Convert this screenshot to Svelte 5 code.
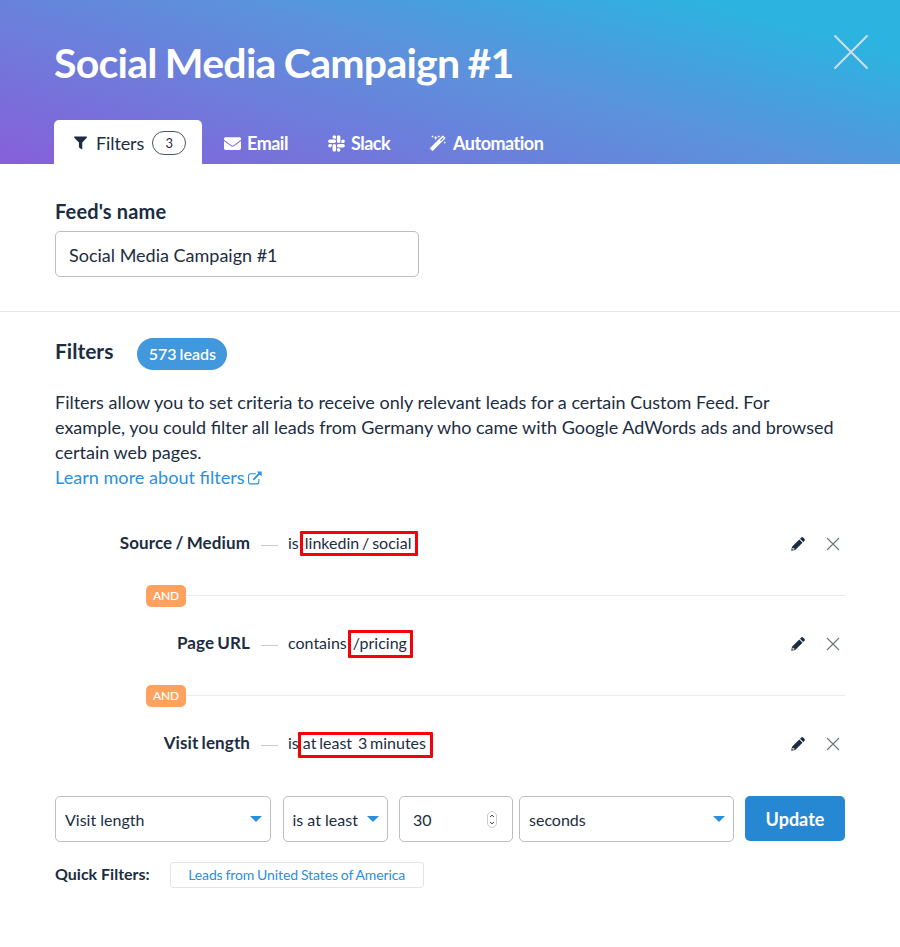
<script>
let feedName = 'Social Media Campaign #1';
let amount = '30';

const tabs = [
    { id: 'email', label: 'Email' },
    { id: 'slack', label: 'Slack' },
    { id: 'automation', label: 'Automation' }
];

let filters = [
    { id: 'source', name: 'Source / Medium', operator: 'is', value: 'linkedin / social' },
    { id: 'page', name: 'Page URL', operator: 'contains', value: '/pricing' },
    { id: 'visit', name: 'Visit length', operator: 'is', value: 'at least  3 minutes' }
];

function removeFilter(id) {
    filters = filters.filter((f) => f.id !== id);
}
</script>

<header>
    <div class="top">
        <h1>{feedName}</h1>
        <button class="close" aria-label="Close">
            <svg width="36" height="36" viewBox="0 0 36 36"><path d="M2 2L34 34M34 2L2 34" /></svg>
        </button>
    </div>

    <nav>
        <button class="tab active">
            <svg class="filter-icon" viewBox="0 0 14 14"><path d="M.6 0h12.800q.8.6.3 1.300L8.900 6.500v6.800q-.2.700-.8.500L5.300 11.600V6.500L.3 1.300Q-.2.600.6 0z" /></svg>
            <span>Filters</span>
            <span class="count">{filters.length}</span>
        </button>
        {#each tabs as tab}
            <button class="tab {tab.id}">
                {#if tab.id === 'email'}
                    <svg width="17" height="17" viewBox="0 0 512 512"><path d="M502.3 190.8c3.900-3.100 9.700-.2 9.700 4.700V400c0 26.500-21.500 48-48 48H48c-26.500 0-48-21.500-48-48V195.600c0-5 5.700-7.800 9.700-4.700 22.400 17.400 52.100 39.500 154.100 113.600 21.100 15.400 56.700 47.800 92.200 47.600 35.700.3 72-32.800 92.300-47.600 102-74.100 131.600-96.300 154-113.700zM256 320c23.200.4 56.600-29.200 73.400-41.400 132.700-96.300 142.800-104.700 173.400-128.700 5.800-4.500 9.200-11.500 9.200-18.900v-19c0-26.500-21.500-48-48-48H48c-26.500 0-48 21.500-48 48v19c0 7.400 3.400 14.300 9.200 18.900 30.600 23.900 40.700 32.400 173.400 128.700 16.800 12.200 50.200 41.800 73.400 41.400z" /></svg>
                {:else if tab.id === 'slack'}
                    <svg width="17" height="19" viewBox="0 0 448 512"><path d="M94.120 315.1c0 25.900-21.160 47.060-47.060 47.060S0 341 0 315.1c0-25.900 21.160-47.060 47.060-47.060h47.060v47.060zm23.720 0c0-25.900 21.160-47.060 47.060-47.060s47.060 21.160 47.060 47.060v117.840c0 25.900-21.160 47.060-47.060 47.060s-47.060-21.160-47.060-47.060V315.1zm47.060-188.980c-25.900 0-47.060-21.160-47.060-47.060S139 32 164.900 32s47.060 21.160 47.060 47.060v47.060H164.900zm0 23.720c25.900 0 47.060 21.160 47.060 47.060s-21.160 47.060-47.060 47.060H47.060C21.160 243.960 0 222.800 0 196.900s21.160-47.060 47.060-47.060H164.900zm188.980 47.060c0-25.900 21.160-47.060 47.060-47.060 25.900 0 47.060 21.160 47.060 47.060s-21.160 47.060-47.060 47.060h-47.060V196.900zm-23.720 0c0 25.900-21.160 47.060-47.060 47.060-25.900 0-47.060-21.160-47.060-47.060V79.060c0-25.900 21.160-47.060 47.060-47.060 25.900 0 47.060 21.160 47.060 47.060V196.900zM283.100 385.880c25.900 0 47.060 21.160 47.060 47.060 0 25.900-21.160 47.060-47.060 47.060-25.900 0-47.060-21.160-47.060-47.060v-47.060h47.060zm0-23.720c-25.900 0-47.060-21.160-47.060-47.060 0-25.900 21.160-47.060 47.060-47.060h117.840c25.900 0 47.060 21.160 47.060 47.060 0 25.900-21.160 47.060-47.060 47.060H283.100z" /></svg>
                {:else}
                    <svg width="16" height="16" viewBox="0 0 16 16"><path fill-rule="evenodd" d="M.3 12.700L12.100.9a1 1 0 0 1 1.400 0l1.500 1.500a1 1 0 0 1 0 1.400L3.200 15.600a1 1 0 0 1-1.400 0L.3 14.100a1 1 0 0 1 0-1.400zM10 5.300l.9.9 3-3.100-.9-.9zM5.700.7l.6 1.500 1.500.6-1.500.6-.6 1.500-.6-1.500-1.500-.6 1.500-.6zM2.500.2l.4.900.9.4-.9.4-.4.900-.4-.9-.9-.4.9-.4zM8.800.2l.4.900.9.4-.9.4-.4.900-.4-.9-.9-.4.9-.4zM14.800 6.300l.4.900.9.4-.9.4-.4.900-.4-.9-.9-.4.9-.4z" /></svg>
                {/if}
                <span>{tab.label}</span>
            </button>
        {/each}
    </nav>
</header>

<section class="name">
    <label for="feed-name">Feed's name</label>
    <input id="feed-name" bind:value={feedName} />
</section>

<section class="filters">
    <div class="heading">
        <h2>Filters</h2>
        <span class="leads">573 leads</span>
    </div>

    <p>
        Filters allow you to set criteria to receive only relevant leads for a certain Custom Feed. For<br />
        example, you could filter all leads from Germany who came with Google AdWords ads and browsed<br />
        certain web pages.
    </p>
    <a href="#more">
        <span>Learn more about filters</span>
        <svg width="14" height="14" viewBox="0 0 14 14"><path class="frame" d="M8 2.700H2.600A2 2 0 0 0 .6 4.700v6.200a2 2 0 0 0 2 2h6.200a2 2 0 0 0 2-2V8" /><path class="arrow" d="M5.200 8.800L11.500 2.500" /><path class="tip" d="M8.800.5h4.900v4.900z" /></svg>
    </a>

    <div class="list">
        {#each filters as filter, i (filter.id)}
            {#if i > 0}
                <div class="joint">
                    <span>AND</span>
                    <hr />
                </div>
            {/if}
            <div class="row">
                <strong>{filter.name}</strong>
                <i class="dash"></i>
                <span class="operator">{filter.operator}</span>
                <span class="value {filter.id}">{filter.value}</span>
                <button class="edit" aria-label="Edit">
                    <svg width="14" height="14" viewBox="0 0 14 14"><path fill-rule="evenodd" d="M.2 13.800L1 9.800 8.300 2.500l3.200 3.200L4.200 13zM1.700 10.700l-.4 1.400.7.7 1.400-.4v-.9h-.9v-.8zM9 1.800L10.300.5a1.300 1.300 0 0 1 1.800 0l1.400 1.400a1.300 1.300 0 0 1 0 1.800L12.200 5z" /></svg>
                </button>
                <button class="remove" aria-label="Remove" on:click={() => removeFilter(filter.id)}>
                    <svg width="14" height="14" viewBox="0 0 14 14"><path d="M1 1L13 13M13 1L1 13" /></svg>
                </button>
            </div>
        {/each}
    </div>

    <div class="form">
        <button class="select field">Visit length<i class="caret"></i></button>
        <button class="select operation">is at least<i class="caret"></i></button>
        <div class="number">
            <input aria-label="Amount" bind:value={amount} />
            <svg width="10" height="17" viewBox="0 0 10 17"><rect x=".5" y=".5" width="9" height="16" rx="4.500" /><path d="M3 6L5 4.200 7 6M3 11L5 12.800 7 11" /></svg>
        </div>
        <button class="select unit">seconds<i class="caret"></i></button>
        <button class="update">Update</button>
    </div>

    <div class="quick">
        <b>Quick Filters:</b>
        <button>Leads from United States of America</button>
    </div>
</section>

<style>
:global(body) {
    margin: 0;
    background: #fff;
}

:global(#app) {
    font-family: Lato, "Liberation Sans", sans-serif;
    color: #1c2d3f;
}

button, input {
    font-family: inherit;
    color: inherit;
    margin: 0;
    padding: 0;
    border: 0;
    background: none;
    box-sizing: border-box;
}

svg {
    display: block;
    flex: none;
}

header {
    height: 164px;
    box-sizing: border-box;
    background: linear-gradient(16deg, #875fda 0%, #5b92dc 55%, #2cb3e0 87%);
    display: flex;
    flex-direction: column;
    justify-content: space-between;
    color: #fff;
}

.top {
    display: flex;
    justify-content: space-between;
    padding: 34px 31px 0 54px;
}

h1 {
    margin: 0;
    font-size: 41px;
    line-height: 58px;
    font-weight: 700;
    letter-spacing: -0.75px;
    word-spacing: -1px;
}

.close {
    height: 36px;
}

.close path {
    stroke: #d0dde9;
    stroke-width: 2;
    stroke-linecap: round;
}

nav {
    display: flex;
    padding-left: 54px;
}

.tab {
    height: 44px;
    display: flex;
    align-items: center;
    font-size: 18px;
    font-weight: 700;
    letter-spacing: -0.5px;
    padding-top: 2px;
}

.tab svg {
    fill: currentColor;
}

.tab.active {
    width: 148px;
    padding-left: 20px;
    background: #fff;
    color: #1c2d3f;
    border-radius: 5px 5px 0 0;
    font-weight: 400;
    font-size: 18px;
    letter-spacing: -0.1px;
}

.filter-icon {
    width: 13px;
    height: 14px;
    margin-right: 9px;
}

.count {
    width: 32px;
    height: 22px;
    margin-left: 8px;
    border: 1px solid #4a5662;
    border-radius: 12px;
    font-size: 13px;
    line-height: 22px;
    text-align: center;
}

.email {
    margin-left: 22px;
    gap: 6px;
}

.slack {
    margin-left: 40px;
    gap: 6px;
}

.automation {
    margin-left: 40px;
    gap: 7px;
}

.name {
    height: 148px;
    padding: 34px 55px 0;
    box-sizing: border-box;
    border-bottom: 1px solid #e6e8ea;
    display: flex;
    flex-direction: column;
}

label {
    font-size: 20px;
    line-height: 26px;
    font-weight: 700;
    letter-spacing: 0.15px;
    margin-bottom: 7px;
}

.name input {
    width: 364px;
    height: 46px;
    padding: 2px 13px 0;
    border: 1px solid #bbbdbf;
    border-radius: 5px;
    font-size: 18px;
}

.filters {
    padding: 26px 55px 0;
}

.heading {
    display: flex;
    align-items: flex-start;
}

h2 {
    margin: 0 24px 0 0;
    font-size: 21px;
    line-height: 26px;
    font-weight: 700;
}

.leads {
    height: 32px;
    width: 90px;
    border-radius: 16px;
    background: #4298dc;
    color: #fff;
    font-size: 16px;
    line-height: 32px;
    font-weight: 600;
    text-align: center;
    word-spacing: -1px;
}

p {
    margin: 20px 0 0;
    font-size: 18px;
    line-height: 25px;
    white-space: nowrap;
}

a {
    display: inline-flex;
    align-items: center;
    gap: 3px;
    color: #2b8fdb;
    text-decoration: none;
    font-size: 18.1px;
    line-height: 25px;
}

.frame, .arrow {
    fill: none;
    stroke: #2b8fdb;
    stroke-width: 1.1;
}

.arrow {
    stroke-width: 1.8;
}

.tip {
    fill: #2b8fdb;
}

.list {
    margin-top: 40px;
}

.row {
    display: flex;
    align-items: center;
    height: 28px;
    font-size: 16px;
    line-height: 26px;
    padding-right: 5px;
}

.row strong {
    width: 195px;
    text-align: right;
    font-size: 17px;
    font-weight: 700;
    letter-spacing: 0.1px;
    word-spacing: -1px;
    padding-bottom: 2px;
}

.dash {
    width: 17px;
    height: 1px;
    margin: 3px 10px 0 11px;
    background: #c3ccd1;
}

.operator, .value {
    padding-bottom: 2px;
}

.value {
    position: relative;
    white-space: pre;
    word-spacing: -1.2px;
    margin-left: 6px;
}

.value.visit {
    margin-left: 4px;
}

/* highlight frame laid over the value */
.value::after {
    content: "";
    position: absolute;
    inset: 1px -7px 2px -5px;
    border: 3px solid #f90008;
    border-radius: 1px;
}

.value.page::after {
    inset: 0 -6px 0 -5px;
}

.value.visit::after {
    inset: 2px -7px 0 -5px;
}

.edit {
    margin-left: auto;
    margin-right: 21px;
}

.edit path {
    fill: #1c2d3f;
}

.remove path {
    stroke: #6a747d;
    stroke-width: 1.1;
}

.joint {
    display: flex;
    align-items: center;
    height: 72px;
    padding: 3px 0 0 91px;
    box-sizing: border-box;
}

.joint span {
    width: 40px;
    height: 22px;
    border-radius: 5px;
    background: #ffa25f;
    color: #fff;
    font-size: 12px;
    line-height: 22px;
    font-weight: 600;
    letter-spacing: -0.2px;
    text-align: center;
}

hr {
    flex: 1;
    margin: 0;
    border: 0;
    height: 1px;
    background: #e8ecee;
}

.form {
    display: flex;
    margin-top: 38px;
}

.select, .number {
    height: 46px;
    display: flex;
    align-items: center;
    justify-content: space-between;
    border: 1px solid #bbbdbf;
    border-radius: 5px;
    font-size: 16px;
    padding: 0 8px 0 9px;
    box-sizing: border-box;
}

.field {
    width: 216px;
}

.operation {
    width: 105px;
    margin-left: 11.5px;
}

.number {
    width: 114px;
    margin-left: 11.5px;
    padding: 0 15px 0 13px;
}

.number input {
    width: 60px;
    font-size: 16px;
}

.number rect {
    fill: #fff;
    stroke: #c9cbcd;
}

.number path {
    fill: none;
    stroke: #444;
}

.unit {
    width: 215px;
    margin-left: 6px;
}

.caret {
    border: 6px solid transparent;
    border-top-color: #2b8fdb;
    border-bottom: 0;
}

.update {
    width: 100px;
    height: 45px;
    margin-left: 11px;
    border-radius: 5px;
    background: #2688d3;
    color: #fff;
    font-size: 18px;
    font-weight: 700;
}

.quick {
    display: flex;
    align-items: center;
    margin-top: 20px;
}

.quick b {
    font-size: 16px;
    font-weight: 700;
    padding-bottom: 3px;
}

.quick button {
    width: 254px;
    height: 26px;
    margin-left: 20px;
    padding-bottom: 1px;
    border: 1px solid #e2e4e6;
    border-radius: 3px;
    color: #2b8fdb;
    font-size: 14px;
    letter-spacing: -0.1px;
    word-spacing: -0.6px;
}
</style>
